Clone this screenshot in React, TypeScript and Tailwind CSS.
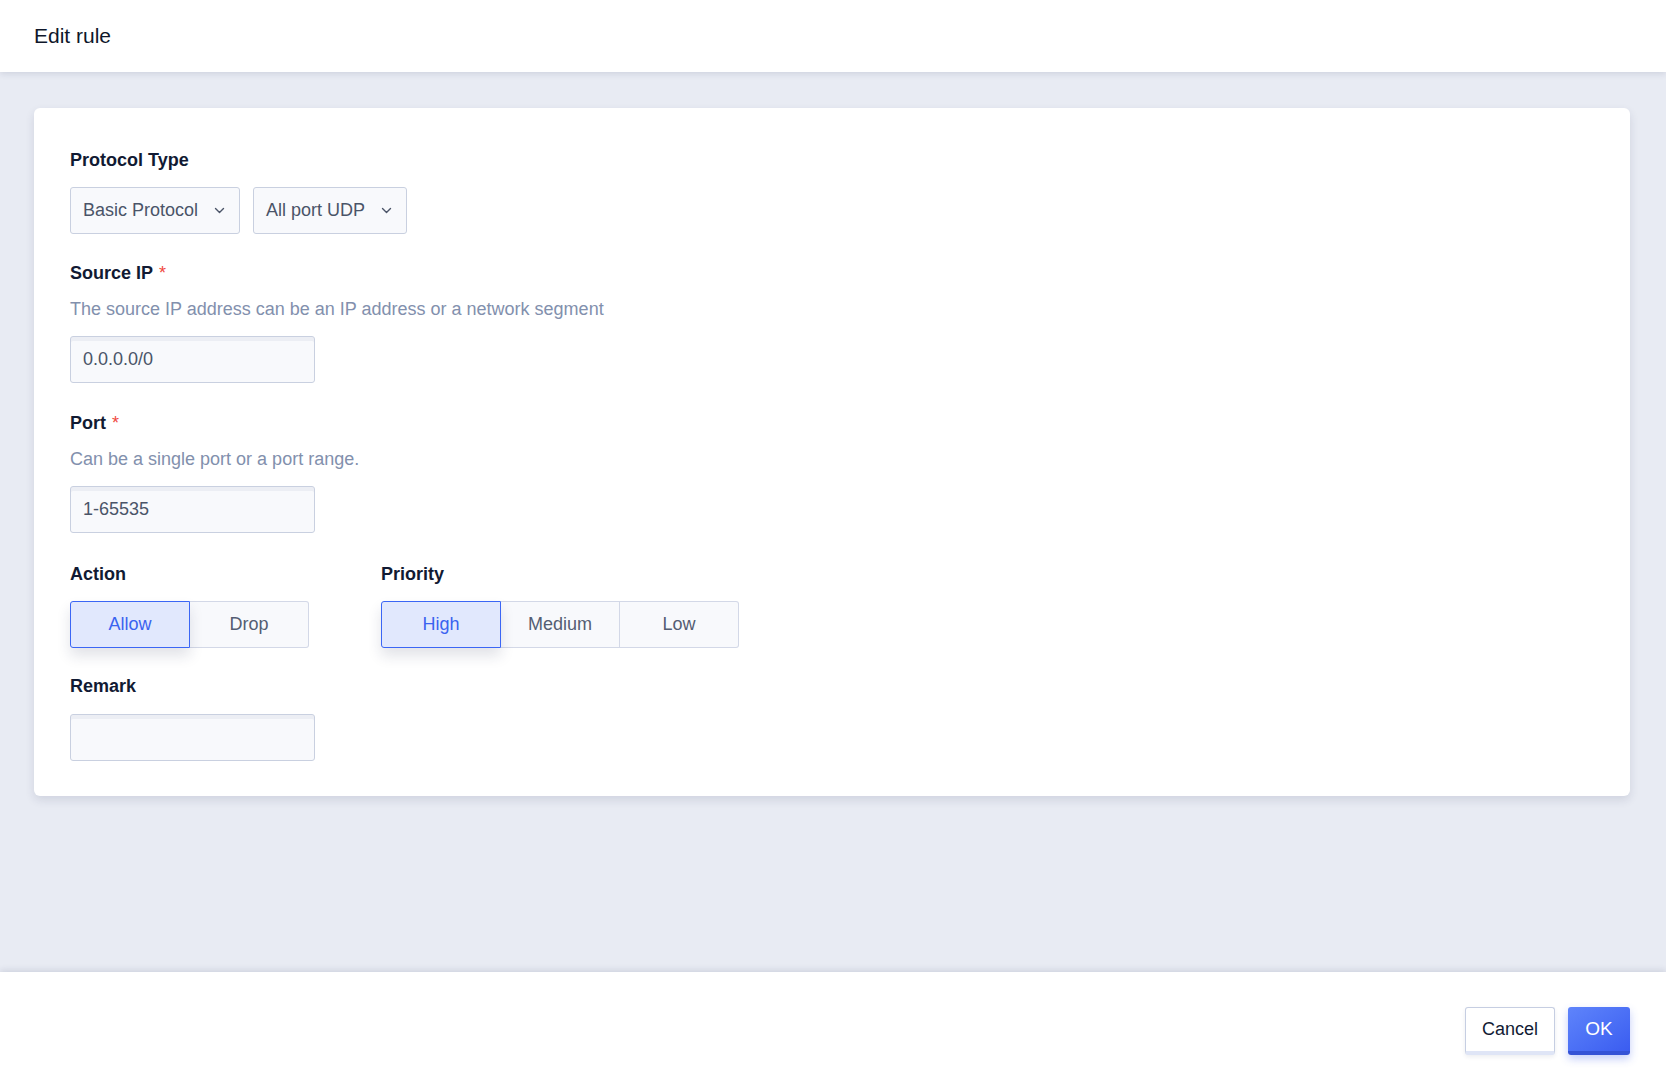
import React from "react";

function Chevron() {
  return (
    <svg width="11" height="7" viewBox="0 0 11 7" fill="none" className="ml-auto">
      <path d="M1.5 1.5 L5.5 5.5 L9.5 1.5" stroke="#4b5468" strokeWidth="1.4" strokeLinecap="round" strokeLinejoin="round" />
    </svg>
  );
}

function Label({ children, required }: { children: React.ReactNode; required?: boolean }) {
  return (
    <div className="text-[18px] leading-[24px] font-bold text-[#111a33]">
      {children}
      {required && <span className="ml-[6px] text-[#f0483e] font-normal">*</span>}
    </div>
  );
}

function Desc({ children }: { children: React.ReactNode }) {
  return <div className="text-[18px] leading-[24px] text-[#8290ad] mt-[12px]">{children}</div>;
}

function Input({ value }: { value?: string }) {
  return (
    <div className="w-[245px] h-[47px] rounded-[3px] border border-[#c9d0e0] bg-[#f8f9fc] shadow-[inset_0_4px_0_#eceef4] flex items-center px-[12px] text-[18px] text-[#4a5468]">
      {value}
    </div>
  );
}

function Seg({ items, active }: { items: string[]; active: number }) {
  return (
    <div className="flex">
      {items.map((t, i) => (
        <div
          key={t}
          className={
            i === active
              ? "relative z-10 w-[120px] h-[47px] flex items-center justify-center text-[18px] text-[#3a63f0] bg-[#e1e8fd] border border-[#3b66f5] rounded-l-[3px] shadow-[0_8px_14px_rgba(30,40,80,0.13)]"
              : "w-[119px] h-[47px] flex items-center justify-center text-[18px] text-[#545d73] bg-[#f8f9fc] border border-[#d3d8e7] border-l-0 last:rounded-r-[3px]"
          }
        >
          {t}
        </div>
      ))}
    </div>
  );
}

export default function App() {
  return (
    <div className="w-[1666px] h-[1084px] flex flex-col bg-[#e8ebf3] overflow-hidden" style={{ fontFamily: '"Liberation Sans", Arial, sans-serif' }}>
      <header className="relative z-10 h-[72px] shrink-0 bg-white shadow-[0_2px_6px_rgba(30,40,80,0.12)] flex items-center px-[34px]">
        <span className="text-[21px] text-[#0f172a]">Edit rule</span>
      </header>
      <main className="flex-1 pt-[36px] pl-[34px] pr-[36px]">
        <div className="bg-white rounded-[6px] shadow-[0_4px_10px_rgba(30,40,80,0.12)] pl-[36px] pt-[40px] pb-[35px]">
          <Label>Protocol Type</Label>
          <div className="flex gap-[13px] mt-[15px]">
            <div className="w-[170px] h-[47px] rounded-[3px] border border-[#c9d0e0] bg-[#f8f9fc] flex items-center pl-[12px] pr-[14px] text-[18px] text-[#4a5468]">
              <span>Basic Protocol</span>
              <Chevron />
            </div>
            <div className="w-[154px] h-[47px] rounded-[3px] border border-[#c9d0e0] bg-[#f8f9fc] flex items-center pl-[12px] pr-[14px] text-[18px] text-[#4a5468]">
              <span>All port UDP</span>
              <Chevron />
            </div>
          </div>

          <div className="mt-[27px]">
            <Label required>Source IP</Label>
            <Desc>The source IP address can be an IP address or a network segment</Desc>
            <div className="mt-[15px]">
              <Input value="0.0.0.0/0" />
            </div>
          </div>

          <div className="mt-[28px]">
            <Label required>Port</Label>
            <Desc>Can be a single port or a port range.</Desc>
            <div className="mt-[15px]">
              <Input value="1-65535" />
            </div>
          </div>

          <div className="mt-[29px] flex gap-[72px]">
            <div>
              <Label>Action</Label>
              <div className="mt-[15px]">
                <Seg items={["Allow", "Drop"]} active={0} />
              </div>
            </div>
            <div>
              <Label>Priority</Label>
              <div className="mt-[15px]">
                <Seg items={["High", "Medium", "Low"]} active={0} />
              </div>
            </div>
          </div>

          <div className="mt-[26px]">
            <Label>Remark</Label>
            <div className="mt-[16px]">
              <Input />
            </div>
          </div>
        </div>
      </main>
      <footer className="relative z-10 h-[112px] shrink-0 bg-white shadow-[0_-2px_6px_rgba(30,40,80,0.12)] flex justify-end items-start pt-[35px] pr-[36px] gap-[13px]">
        <button className="h-[48px] px-[16px] rounded-[3px] bg-white border border-[#c6cee2] border-b-[4px] border-b-[#dfe5f6] text-[18px] text-[#111a33] shadow-[0_2px_4px_rgba(30,40,80,0.08)]">
          Cancel
        </button>
        <button className="h-[48px] w-[62px] rounded-[3px] bg-gradient-to-br from-[#5f84fb] to-[#3b5cf0] border-b-[4px] border-b-[#3452d6] text-[19px] text-white shadow-[0_4px_8px_rgba(59,92,240,0.3)]">
          OK
        </button>
      </footer>
    </div>
  );
}
